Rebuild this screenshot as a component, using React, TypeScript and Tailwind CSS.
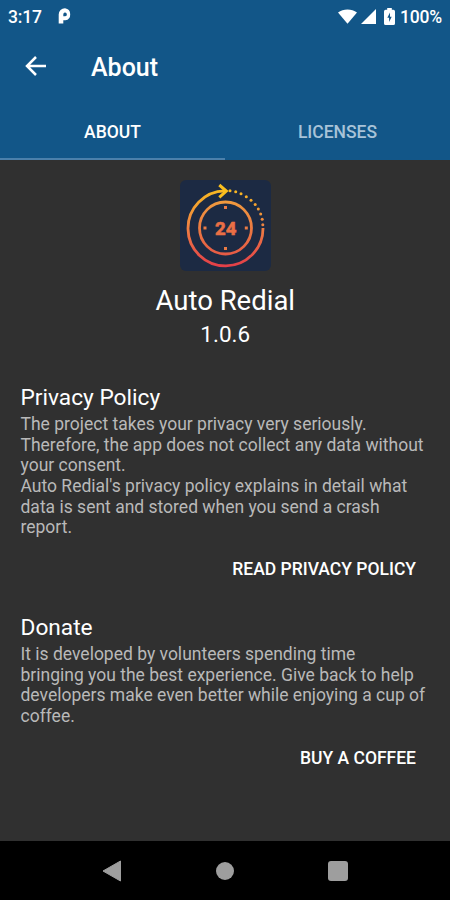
import type { ReactNode } from "react";

function StatusBar() {
  return (
    <div className="flex h-8 items-center pl-2 pr-[8px] text-[17.5px] leading-8 text-white">
      <span className="w-[50px] pt-px font-medium tracking-[-0.2px]">3:17</span>
      <svg width="14" height="16" viewBox="0 0 14 16">
        <path
          fillRule="evenodd"
          fill="white"
          d="M0.7 15.4V6.5A6.2 6.2 0 0 1 7 0.3A6.1 6.1 0 0 1 7.4 12.3H5.3V15.4ZM6.7 4.5A2 2 0 0 0 5.3 6.5V8.3H7.2A1.9 1.9 0 0 0 6.7 4.5Z"
        />
      </svg>
      <div className="ml-auto flex items-center">
        <svg width="19" height="15" viewBox="0 0 20 15">
          <path d="M0 3.3C5.6-1 14.4-1 20 3.3L10 15Z" fill="white" />
        </svg>
        <svg className="ml-[4px]" width="15" height="15" viewBox="0 0 15 15">
          <path d="M15 0V15H0Z" fill="white" />
        </svg>
        <svg className="ml-[8px]" width="11" height="17" viewBox="0 0 11 17">
          <path d="M3.2 0H7.8V1.8H9.4Q11 1.8 11 3.4V15.4Q11 17 9.4 17H1.6Q0 17 0 15.4V3.4Q0 1.8 1.6 1.8H3.2Z" fill="white" />
          <path d="M6 4.4L3.3 9.8H5.1V14L7.7 8.7H6Z" fill="#125688" />
        </svg>
        <span className="ml-[5px] pt-px font-medium tracking-[-0.2px]">100%</span>
      </div>
    </div>
  );
}

function AppLogo() {
  const dots = [
    [50, 10.7],
    [55.7, 11.7],
    [61, 13.8],
    [66.3, 16.8],
    [71, 20.3],
    [75.2, 24.5],
    [78.3, 29],
    [80.7, 34],
    [82.2, 39.3],
    [82.8, 44.7],
  ];

  return (
    <svg width="91" height="91" viewBox="0 0 91 91">
      <defs>
        <linearGradient id="ring" gradientUnits="userSpaceOnUse" x1="0" y1="8" x2="0" y2="86">
          <stop offset="0" stopColor="#f8bb20" />
          <stop offset="0.5" stopColor="#ee8043" />
          <stop offset="1" stopColor="#e33f48" />
        </linearGradient>
        <linearGradient id="dial" gradientUnits="userSpaceOnUse" x1="0" y1="21" x2="0" y2="75">
          <stop offset="0" stopColor="#f09a3e" />
          <stop offset="1" stopColor="#e65a45" />
        </linearGradient>
      </defs>
      <rect width="91" height="91" rx="6" fill="#1c2a43" />
      <g fill="none" strokeWidth="2.8">
        <path d="M83 48A37.5 37.5 0 1 1 45 10.9" stroke="url(#ring)" />
        <path d="M39.3 5L46.3 11L39.3 17.3" stroke="#f9be1e" strokeWidth="3" />
        <circle cx="45.5" cy="48" r="26" stroke="url(#dial)" />
      </g>
      {dots.map(([x, y]) => (
        <circle key={x} cx={x} cy={y} r="1.5" fill="url(#ring)" />
      ))}
      <g fill="#ea7b45">
        <rect x="44" y="26" width="3" height="3" />
        <rect x="44" y="67" width="3" height="3" />
        <rect x="23.5" y="46.5" width="3" height="3" />
        <rect x="64.8" y="46.5" width="3" height="3" />
      </g>
      <text
        x="35"
        y="54.8"
        fill="#ea6f45"
        stroke="#ea6f45"
        strokeWidth="0.5"
        fontFamily="Roboto, sans-serif"
        fontSize="19"
        fontWeight="800"
        textLength="21.5"
        lengthAdjust="spacingAndGlyphs"
      >
        24
      </text>
    </svg>
  );
}

interface SectionProps {
  title: string;
  action: string;
  className?: string;
  children: ReactNode;
}

function Section({ title, action, className, children }: SectionProps) {
  return (
    <section className={className}>
      <h2 className="text-[22.7px] leading-[27px] text-white">{title}</h2>
      <div className="mt-[3px] whitespace-nowrap text-[17.5px] leading-[20.65px] text-[#b9b9b9]">{children}</div>
      <div className="mt-[18px] flex justify-end pr-[14px]">
        <button className="h-[26px] text-[17.5px] font-medium leading-[26px] text-white">{action}</button>
      </div>
    </section>
  );
}

export default function App() {
  return (
    <div className="flex h-[900px] w-[450px] flex-col overflow-hidden bg-[#303030] font-['Roboto',sans-serif]">
      <header className="h-[160px] bg-[#125688]">
        <StatusBar />
        <div className="flex h-[70px] items-center pl-[25px]">
          <svg className="mb-[2px]" width="22" height="20" viewBox="0 0 22 20" fill="none" stroke="white" strokeWidth="2.5">
            <path d="M21 10H2.5M11 1L2 10L11 19" />
          </svg>
          <h1 className="ml-[44px] pt-[2px] text-[25px] font-medium leading-[30px] text-white">About</h1>
        </div>
        <nav className="grid grid-cols-2 text-center text-[17.5px] font-medium leading-[60px]">
          <div className="h-[58px] border-b-2 border-[#4b80ab] text-white">ABOUT</div>
          <div className="h-[58px] text-[#a8c3d8]">LICENSES</div>
        </nav>
      </header>

      <main className="flex-1 pl-[20.5px] pt-[20px]">
        <div className="flex flex-col items-center pr-[20px] text-white">
          <AppLogo />
          <div className="mt-[13px] text-[27.5px] leading-[34px]">Auto Redial</div>
          <div className="mt-[3px] text-[22.5px] leading-[27px]">1.0.6</div>
        </div>

        <Section title="Privacy Policy" action="READ PRIVACY POLICY" className="mt-[36px] pr-[20px]">
          <p>The project takes your privacy very seriously.</p>
          <p>
            Therefore, the app does not collect any data without
            <br />
            your consent.
          </p>
          <p>
            Auto Redial's privacy policy explains in detail what
            <br />
            data is sent and stored when you send a crash
            <br />
            report.
          </p>
        </Section>

        <Section title="Donate" action="BUY A COFFEE" className="mt-[32px] pr-[20px]">
          <p>
            It is developed by volunteers spending time
            <br />
            bringing you the best experience. Give back to help
            <br />
            developers make even better while enjoying a cup of
            <br />
            coffee.
          </p>
        </Section>
      </main>

      <footer className="grid h-[59px] grid-cols-[1fr_20px_1fr] items-center bg-black text-[#9e9e9e]">
        <svg className="ml-[102px]" width="20" height="22" viewBox="0 0 20 22">
          <path d="M18.5 1V21L1 11Z" fill="currentColor" stroke="currentColor" strokeLinejoin="round" />
        </svg>
        <div className="mx-auto size-[18px] rounded-full bg-[#9e9e9e]" />
        <div className="ml-[93px] size-5 rounded-[3px] bg-[#9e9e9e]" />
      </footer>
    </div>
  );
}
